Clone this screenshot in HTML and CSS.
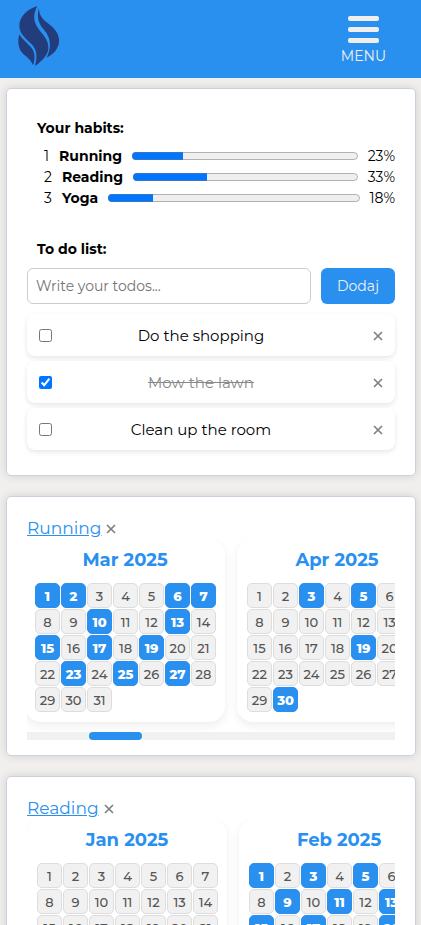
FILE: index.html
```html
<!DOCTYPE html>
<html lang="en">
<head>
<meta charset="utf-8">
<meta name="viewport" content="width=device-width, initial-scale=1">
<title>Habits</title>
<link rel="stylesheet" href="styles.css">
</head>
<body>
<header class="topbar">
  <a class="logo" href="#" aria-label="Home">
    <svg viewBox="0 0 126 186" width="42" height="62" aria-hidden="true">
      <path d="M61 3C29 13 6 36 7 64C8 88 27 101 44 118C61 135 61 158 54 183C74 169 92 152 94 132C96 108 82 94 67 75C50 54 46 31 61 3Z"/>
      <path d="M66 8C58 38 65 56 81 74C102 98 104 127 89 158C112 147 128 127 126 103C124 78 105 64 87 50C69 35 66 22 66 8Z"/>
      <path d="M7 88C2 104 3 122 10 136C20 154 40 158 48 181C55 163 55 142 42 127C30 113 15 103 7 88Z"/>
    </svg>
  </a>
  <button class="menu" type="button">
    <svg viewBox="0 0 32 28" width="32" height="28" aria-hidden="true">
      <rect x="1" y="1" width="31" height="5" rx="2"/>
      <rect x="1" y="12" width="31" height="5" rx="2"/>
      <rect x="1" y="23" width="31" height="5" rx="2"/>
    </svg>
    <span>MENU</span>
  </button>
</header>
<main class="page">
  <section class="panel overview">
    <h2>Your habits:</h2>
    <ol class="habits">
      <li><span>1</span><label for="p1">Running</label><progress id="p1" max="100" value="23"></progress><span>23%</span></li>
      <li><span>2</span><label for="p2">Reading</label><progress id="p2" max="100" value="33"></progress><span>33%</span></li>
      <li><span>3</span><label for="p3">Yoga</label><progress id="p3" max="100" value="18"></progress><span>18%</span></li>
    </ol>
    <h2>To do list:</h2>
    <form class="add">
      <input type="text" placeholder="Write your todos..." aria-label="Write your todos">
      <button type="button">Dodaj</button>
    </form>
    <ul class="todos">
      <li><input type="checkbox" id="t1"><label for="t1">Do the shopping</label><button class="remove" type="button" aria-label="Remove"><svg viewBox="0 0 10 10" width="10" height="10"><path d="M1 1L9 9M9 1L1 9"/></svg></button></li>
      <li><input type="checkbox" id="t2" checked><label for="t2">Mow the lawn</label><button class="remove" type="button" aria-label="Remove"><svg viewBox="0 0 10 10" width="10" height="10"><path d="M1 1L9 9M9 1L1 9"/></svg></button></li>
      <li><input type="checkbox" id="t3"><label for="t3">Clean up the room</label><button class="remove" type="button" aria-label="Remove"><svg viewBox="0 0 10 10" width="10" height="10"><path d="M1 1L9 9M9 1L1 9"/></svg></button></li>
    </ul>
  </section>
  <section class="panel">
    <div class="habit-head"><a href="#">Running</a><button class="remove" type="button" aria-label="Remove"><svg viewBox="0 0 10 10" width="10" height="10"><path d="M1 1L9 9M9 1L1 9"/></svg></button></div>
    <div class="months" data-habit="running"></div>
    <div class="track"><div class="thumb"></div></div>
  </section>
  <section class="panel">
    <div class="habit-head"><a href="#">Reading</a><button class="remove" type="button" aria-label="Remove"><svg viewBox="0 0 10 10" width="10" height="10"><path d="M1 1L9 9M9 1L1 9"/></svg></button></div>
    <div class="months" data-habit="reading"></div>
    <div class="track"><div class="thumb"></div></div>
  </section>
</main>
<script src="script.js"></script>
</body>
</html>
```
FILE: styles.css
```css
* { box-sizing: border-box; }

body {
  margin: 0;
  background: #f0efed;
  color: #000;
  font-family: Montserrat, Inter, sans-serif;
  font-size: 14px;
}

button, input { font: inherit; }
button { cursor: pointer; }

.topbar {
  display: flex;
  justify-content: space-between;
  align-items: center;
  height: 78px;
  padding: 0 35px 0 17px;
  background: #2a90f0;
}

.logo { display: flex; padding-bottom: 6px; }
.logo svg { fill: #233c7b; }

.menu {
  display: flex;
  flex-direction: column;
  align-items: center;
  gap: 4px;
  padding: 2px 0 0;
  border: 0;
  background: none;
  color: #f0efed;
  line-height: 18px;
}
.menu svg { fill: #f0efed; }

.page {
  display: flex;
  flex-direction: column;
  gap: 20px;
  padding: 10px 5px 20px 6px;
}

.panel {
  padding: 20px 20px 15px;
  border: 1px solid #ccd1df;
  border-radius: 5px;
  background: #fff;
  box-shadow: 0 0 10px rgba(0, 0, 0, 0.12);
}

.overview { padding-bottom: 25px; }

h2 {
  margin: 0;
  padding: 10px 10px 9px;
  font-size: 14px;
  line-height: 19px;
}

.habits {
  margin: -1px 0 21px;
  padding: 0 0 0 17px;
  list-style: none;
}
.habits li {
  display: flex;
  align-items: center;
  gap: 10px;
  line-height: 21px;
}
.habits label { font-weight: 700; }
.habits progress {
  flex: 1;
  min-width: 0;
  height: 16px;
  margin-bottom: 1px;
}

.add { display: flex; gap: 10px; }
.add input {
  flex: 1;
  min-width: 0;
  height: 36px;
  padding: 0 8px;
  border: 1px solid #ccc;
  border-radius: 6px;
}
.add button {
  width: 74px;
  border: 0;
  border-radius: 6px;
  background: #2a90f0;
  color: #f0efed;
}

.todos {
  display: flex;
  flex-direction: column;
  gap: 5px;
  margin: 10px 0 0;
  padding: 0;
  list-style: none;
}
.todos li {
  display: flex;
  align-items: center;
  height: 42px;
  padding: 0 12px;
  border-radius: 8px;
  background: #fff;
  box-shadow: 0 2px 5px rgba(0, 0, 0, 0.1);
  font-size: 15px;
}
.todos input { margin: 0; }
.todos label { flex: 1; padding-right: 23px; text-align: center; }
.todos input:checked + label { color: #888; text-decoration: line-through; }

.remove { display: flex; padding: 2px 0 0; border: 0; background: none; }
.remove svg { fill: none; stroke: #808080; stroke-width: 1.7; }

.habit-head {
  display: flex;
  align-items: center;
  gap: 5px;
  font-size: 17px;
  line-height: 22px;
}
.habit-head a { color: #2a90f0; }

.months {
  display: flex;
  gap: 12px;
  padding-bottom: 10px;
  overflow-x: auto;
  scrollbar-width: none;
}

.track { background: #f1f1f1; }
.thumb {
  height: 8px;
  border-radius: 4px;
  background: #2a90f0;
}

.month {
  flex: none;
  width: 200px;
  padding: 10px;
  border-radius: 16px;
  background: #fff;
  box-shadow: 0 4px 10px rgba(0, 0, 0, 0.07);
}
.month h3 {
  margin: 0 0 12px;
  color: #2a90f0;
  font-size: 18px;
  line-height: 22px;
  text-align: center;
}

.days {
  display: grid;
  grid-template-columns: repeat(7, 25px);
  grid-auto-rows: 25px;
  gap: 1px;
}
.days button {
  padding: 0;
  border: 1px solid #ddd;
  border-radius: 5px;
  background: #f1f1f1;
  color: #555;
  font-size: 13px;
  font-weight: 500;
}
.days .done {
  border-color: #2a90f0;
  background: #2a90f0;
  color: #fff;
  font-weight: 800;
}
```
FILE: script.js
```js
const names = ["Jan", "Feb", "Mar", "Apr", "May", "Jun", "Jul", "Aug", "Sep", "Oct", "Nov", "Dec"];
const habits = {
  running: { offset: 426, done: { 2: [1, 2, 6, 7, 10, 13, 15, 17, 19, 23, 25, 27], 3: [3, 5, 19, 30] } },
  reading: { offset: 0, done: { 1: [1, 3, 5, 9, 11, 13, 15, 17, 20] } }
};

function fillMonth(month, index, done) {
  const title = document.createElement("h3");
  title.textContent = names[index] + " 2025";
  const days = document.createElement("div");
  days.className = "days";
  const count = new Date(2025, index + 1, 0).getDate();
  for (let day = 1; day <= count; day++) {
    const button = document.createElement("button");
    button.type = "button";
    button.textContent = day;
    if (done.includes(day)) button.className = "done";
    days.append(button);
  }
  month.append(title, days);
}

document.querySelectorAll(".months").forEach((strip) => {
  const habit = habits[strip.dataset.habit];
  const thumb = strip.nextElementSibling.firstElementChild;
  const months = names.map(() => {
    const month = document.createElement("article");
    month.className = "month";
    strip.append(month);
    return month;
  });

  // Months get their days only once they scroll into view.
  function update() {
    const view = strip.getBoundingClientRect();
    months.forEach((month, index) => {
      const box = month.getBoundingClientRect();
      if (!month.firstChild && box.right > view.left && box.left < view.right) {
        fillMonth(month, index, habit.done[index] || []);
      }
    });
    thumb.style.width = (100 * strip.clientWidth) / strip.scrollWidth + "%";
    thumb.style.marginLeft = (100 * strip.scrollLeft) / strip.scrollWidth + "%";
  }

  strip.scrollLeft = habit.offset;
  update();
  strip.addEventListener("scroll", update);
  window.addEventListener("resize", update);
});
```
